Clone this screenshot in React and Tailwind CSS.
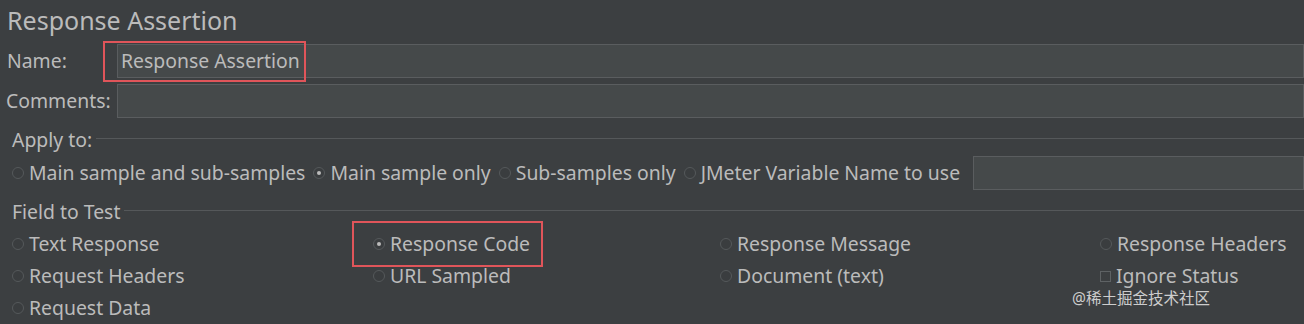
const font = { fontFamily: '"Noto Sans", "Noto Sans CJK SC", sans-serif' };

function Radio({ checked }) {
  return (
    <span className="inline-flex h-[12px] w-[12px] shrink-0 items-center justify-center rounded-full border border-[#55595b] bg-[#3a3d3f]">
      {checked && <span className="h-[4px] w-[4px] rounded-full bg-[#bbbbbb]" />}
    </span>
  );
}

function Check() {
  return <span className="inline-block h-[11px] w-[11px] shrink-0 border border-[#5e6264] bg-[#3c3f41]" />;
}

function Option({ label, checked, box }) {
  return (
    <span className="inline-flex items-center gap-[5px] whitespace-nowrap">
      {box ? <Check /> : <Radio checked={checked} />}
      <span>{label}</span>
    </span>
  );
}

function Field({ children, className = '' }) {
  return (
    <div
      className={`flex h-[34px] flex-1 items-center border border-[#5a5d5f] bg-[#45494a] px-[3px] ${className}`}
    >
      {children}
    </div>
  );
}

function Legend({ title }) {
  return (
    <div className="flex h-[32px] items-center pl-[12px]">
      <span className="pr-[4px]">{title}</span>
      <div className="mb-[4px] h-px flex-1 bg-[#55585a]" />
    </div>
  );
}

export default function App() {
  return (
    <div
      className="relative h-[324px] w-[1304px] overflow-hidden bg-[#3c3f41] text-[19.4px] leading-none text-[#bbbbbb]"
      style={font}
    >
      <div className="flex h-[41px] items-center pl-[7px] text-[25px]">Response Assertion</div>

      <div className="flex h-[40px] items-center">
        <span className="w-[117px] pl-[7px]">Name:</span>
        <div className="relative flex flex-1">
          <div className="pointer-events-none absolute left-[-14px] top-[-3px] h-[41px] w-[203px] border-2 border-[#e0555a]" />
          <Field>Response Assertion</Field>
        </div>
      </div>

      <div className="flex h-[40px] items-center">
        <span className="w-[117px] pl-[6px]">Comments:</span>
        <Field />
      </div>

      <div className="mt-[3px]">
        <Legend title="Apply to:" />
      </div>

      <div className="flex h-[34px] items-center gap-[8px] pl-[12px]">
        <Option label="Main sample and sub-samples" />
        <Option label="Main sample only" checked />
        <Option label="Sub-samples only" />
        <Option label="JMeter Variable Name to use" />
        <Field className="ml-[5px]" />
      </div>

      <div className="mt-[6px]">
        <Legend title="Field to Test" />
      </div>

      <div className="grid grid-cols-[361px_347px_380px_1fr] grid-rows-[32px_32px_32px] items-center pl-[12px]">
        <Option label="Text Response" />
        <div className="relative flex items-center">
          <div className="pointer-events-none absolute left-[-21px] top-[-13px] h-[46px] w-[191px] border-2 border-[#e0555a]" />
          <Option label="Response Code" checked />
        </div>
        <Option label="Response Message" />
        <Option label="Response Headers" />

        <Option label="Request Headers" />
        <Option label="URL Sampled" />
        <Option label="Document (text)" />
        <Option label="Ignore Status" box />

        <Option label="Request Data" />
      </div>

      <span className="pointer-events-none absolute left-[1072px] top-[291px] whitespace-nowrap text-[15.5px] text-[#cdcdcd]">
        @稀土掘金技术社区
      </span>
    </div>
  );
}
